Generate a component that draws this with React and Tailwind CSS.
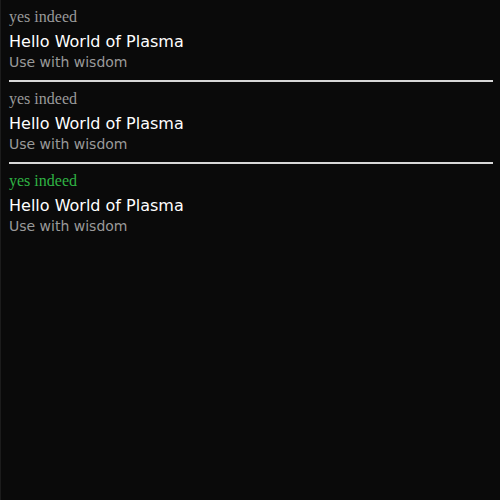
const items = [
  { tag: 'yes indeed', tagColor: 'text-[#9a9a9a]' },
  { tag: 'yes indeed', tagColor: 'text-[#9a9a9a]' },
  { tag: 'yes indeed', tagColor: 'text-[#2fb344]' },
]

export default function App() {
  return (
    <div className="w-[500px] h-[500px] bg-[#0a0a0a] border-l border-[#1c1c1c] overflow-hidden">
      <div className="w-[484px] ml-[8px]">
        {items.map((item, i) => (
          <div key={i}>
            <div className="h-[80px] pt-[7px]">
              <p className={`text-[16px] leading-[20px] ${item.tagColor} font-['Liberation_Serif',serif]`}>{item.tag}</p>
              <p className="mt-[5px] text-[16px] leading-[20px] text-white font-['DejaVu_Sans',sans-serif]">Hello World of Plasma</p>
              <p className="text-[14px] leading-[20px] text-[#9a9a9a] font-['DejaVu_Sans',sans-serif]">Use with wisdom</p>
            </div>
            {i < items.length - 1 && <div className="h-[2px] bg-[#d8d8d8]" />}
          </div>
        ))}
      </div>
    </div>
  )
}
